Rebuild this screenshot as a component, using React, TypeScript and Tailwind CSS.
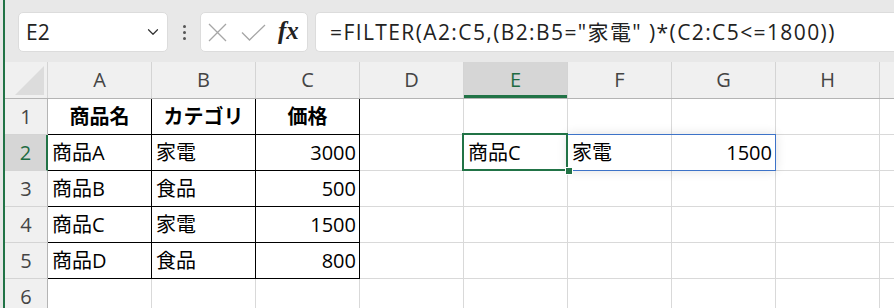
import React from 'react';
import { ChevronDown } from 'lucide-react';

const FONT = '"Open Sans", "Noto Sans CJK JP", sans-serif';

const COLS = ['A', 'B', 'C', 'D', 'E', 'F', 'G', 'H', 'I'];

type Cell = { text: string; align?: 'left' | 'right' | 'center'; bold?: boolean };

// row number -> column index -> cell
const DATA: Record<number, Record<number, Cell>> = {
  1: {
    0: { text: '商品名', align: 'center', bold: true },
    1: { text: 'カテゴリ', align: 'center', bold: true },
    2: { text: '価格', align: 'center', bold: true },
  },
  2: {
    0: { text: '商品A' },
    1: { text: '家電' },
    2: { text: '3000', align: 'right' },
    4: { text: '商品C' },
    5: { text: '家電' },
    6: { text: '1500', align: 'right' },
  },
  3: { 0: { text: '商品B' }, 1: { text: '食品' }, 2: { text: '500', align: 'right' } },
  4: { 0: { text: '商品C' }, 1: { text: '家電' }, 2: { text: '1500', align: 'right' } },
  5: { 0: { text: '商品D' }, 1: { text: '食品' }, 2: { text: '800', align: 'right' } },
};

const inTable = (row: number, col: number) => row >= 1 && row <= 5 && col <= 2;

const Toolbar: React.FC = () => (
  <div className="h-[62px] shrink-0 flex items-start pt-[12px] pl-[13px] bg-[#e8e8e8]">
    {/* name box */}
    <div className="w-[150px] h-[40px] bg-white rounded-[5px] border border-[#dcdcdc] flex items-center pl-[7px] pr-[5px]">
      <span className="flex-1 text-[21px] text-[#222] leading-none">E2</span>
      <ChevronDown className="w-[18px] h-[18px] text-[#333]" strokeWidth={1.6} />
    </div>
    {/* dots */}
    <div className="w-[32px] h-[40px] flex flex-col items-center justify-center gap-[3px]">
      <span className="w-[3px] h-[3px] rounded-full bg-[#555]" />
      <span className="w-[3px] h-[3px] rounded-full bg-[#555]" />
      <span className="w-[3px] h-[3px] rounded-full bg-[#555]" />
    </div>
    {/* cancel / enter / fx */}
    <div className="w-[108px] h-[40px] bg-white rounded-[5px] border border-[#dcdcdc] flex items-center pl-[7px]">
      <svg width="19" height="19" viewBox="0 0 19 19" className="mr-[14px]">
        <path d="M1 1L18 18M18 1L1 18" stroke="#a6a6a6" strokeWidth="1.3" fill="none" />
      </svg>
      <svg width="25" height="17" viewBox="0 0 25 17" className="mr-[12px]">
        <path d="M1 8.5L8.5 16L24 1" stroke="#a6a6a6" strokeWidth="1.3" fill="none" />
      </svg>
      <span
        className="text-[25px] italic font-bold leading-none text-[#222] -mt-[3px]"
        style={{ fontFamily: '"Liberation Serif", serif' }}
      >
        fx
      </span>
    </div>
    {/* formula */}
    <div className="ml-[7px] flex-1 h-[40px] bg-white rounded-l-[5px] border border-r-0 border-[#dcdcdc] flex items-center pl-[14px] whitespace-nowrap">
      <span className="text-[21px] text-[#222] leading-none tracking-[1.4px]">=FILTER(A2:C5,(B2:B5="家電" )*(C2:C5&lt;=1800))</span>
    </div>
  </div>
);

const HeaderRow: React.FC = () => (
  <div className="flex h-[37px] shrink-0 bg-[#f0f0f0] border-b border-[#b4b4b4]">
    <div className="w-[43px] shrink-0 border-r border-[#d4d4d4] flex items-end justify-end pr-[3px] pb-[3px]">
      <svg width="29" height="29" viewBox="0 0 29 29">
        <polygon points="29,0 29,29 0,29" fill="#dcdcdc" />
      </svg>
    </div>
    {COLS.map((c, i) => {
      const active = c === 'E';
      return (
        <div
          key={c}
          className={`shrink-0 w-[104px] flex items-center justify-center text-[20px] border-r border-[#d4d4d4] ${
            active ? 'bg-[#d6d6d6] text-[#1e6b42] shadow-[inset_0_-3px_0_#217346]' : 'text-[#444]'
          } ${i === COLS.length - 1 ? 'border-r-0' : ''}`}
        >
          {i < COLS.length - 1 ? c : ''}
        </div>
      );
    })}
  </div>
);

const GridRow: React.FC<{ row: number }> = ({ row }) => {
  const activeRow = row === 2;
  return (
    <div className="flex h-[36px] shrink-0">
      <div
        className={`w-[43px] shrink-0 flex items-center justify-center text-[20px] border-b border-[#d4d4d4] ${
          activeRow
            ? 'bg-[#d6d6d6] text-[#1e6b42] border-r-2 border-r-[#217346]'
            : 'bg-[#f0f0f0] text-[#444] border-r border-r-[#b4b4b4]'
        }`}
      >
        {row}
      </div>
      {COLS.map((c, i) => {
        const cell = DATA[row]?.[i];
        const black = inTable(row, i);
        const align =
          cell?.align === 'right' ? 'justify-end pr-[3px]' : cell?.align === 'center' ? 'justify-center' : 'justify-start pl-[4px]';
        return (
          <div
            key={c}
            className={`shrink-0 w-[104px] bg-white flex items-center text-[20px] text-black whitespace-nowrap ${align} ${
              black ? 'border-r border-b border-black' : 'border-r border-b border-[#d9d9d9]'
            } ${cell?.bold ? 'font-bold' : ''}`}
          >
            {cell?.text}
          </div>
        );
      })}
    </div>
  );
};

const App: React.FC = () => {
  return (
    <div className="w-[894px] h-[308px] overflow-hidden flex bg-[#e8e8e8]" style={{ fontFamily: FONT }}>
      <div className="w-[3px] shrink-0 bg-[#e8e8e8]" />
      <div className="w-[2px] shrink-0 bg-[#217346]" />
      <div className="flex-1 flex flex-col min-w-0">
        <Toolbar />
        <HeaderRow />
        <div className="relative flex flex-col">
          {[1, 2, 3, 4, 5, 6].map((r) => (
            <GridRow key={r} row={r} />
          ))}
          {/* spill range F2:G2 */}
          <div className="absolute left-[562px] top-[35px] w-[209px] h-[37px] border border-[#3d73c8] shadow-[0_0_10px_rgba(0,0,0,0.12)] pointer-events-none" />
          {/* active cell E2 */}
          <div className="absolute left-[457px] top-[34px] w-[106px] h-[38px] border-2 border-[#217346] pointer-events-none" />
          <div className="absolute left-[560px] top-[68px] w-[6px] h-[6px] bg-[#217346] border border-white box-content pointer-events-none" />
        </div>
      </div>
    </div>
  );
};

export default App;
